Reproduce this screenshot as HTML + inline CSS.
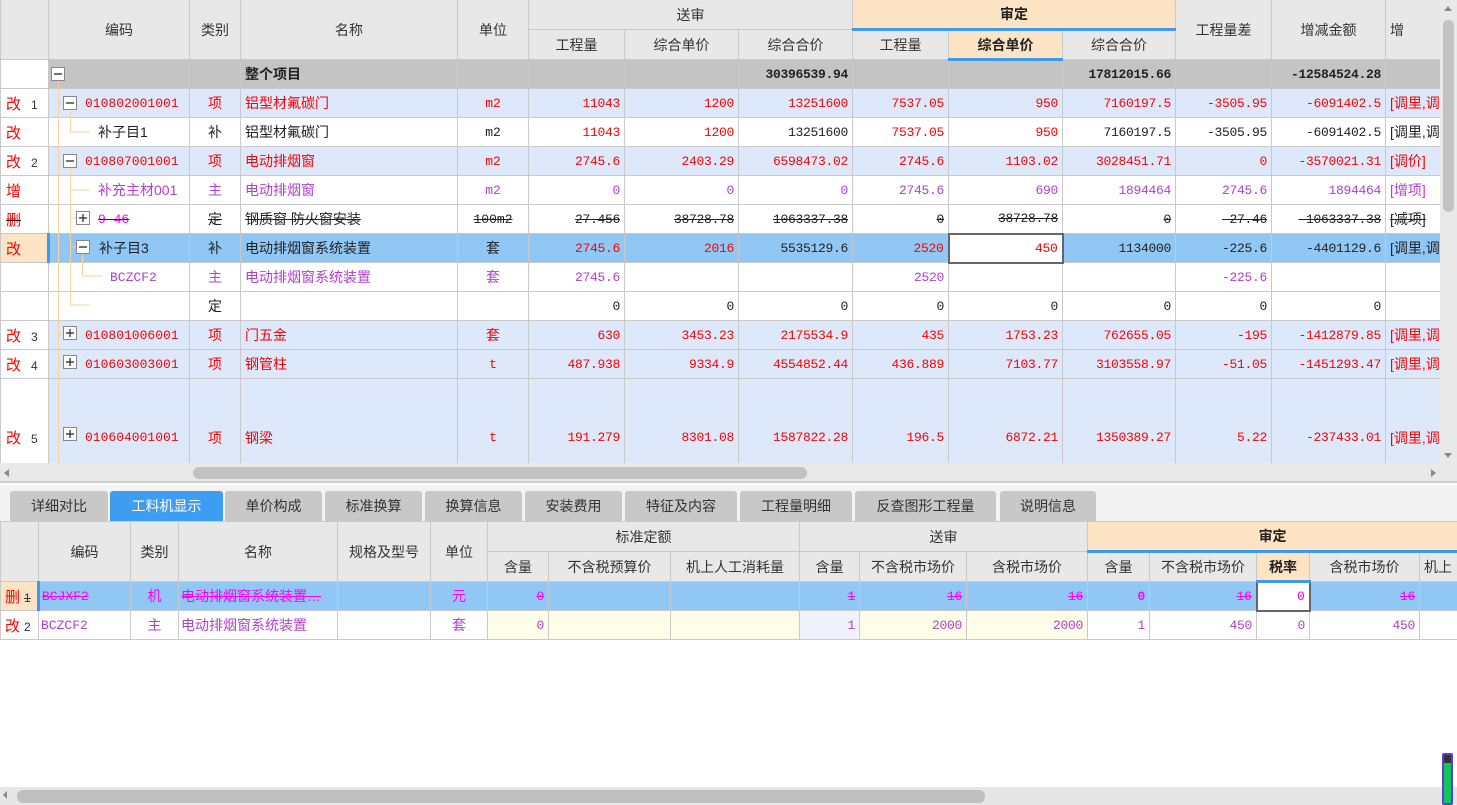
<!DOCTYPE html>
<html><head><meta charset="utf-8">
<style>
*{box-sizing:border-box;margin:0;padding:0}
body{width:1457px;height:805px;overflow:hidden;background:#fff;font-family:"Liberation Sans","Noto Sans CJK SC",sans-serif;font-size:14px;color:#222;position:relative}
table{border-collapse:collapse;table-layout:fixed;position:absolute}
td{border:1px solid #c9c9c9;white-space:nowrap;overflow:hidden;padding:0 4px;height:29px;vertical-align:middle}
.h td{background:#e8e8e8;text-align:center;color:#333;height:30px}
.top .h td{height:30px}
.n{text-align:right;font-family:"Liberation Mono","Noto Sans CJK SC",monospace;font-size:13px;letter-spacing:-0.3px}
.c{text-align:center}
.tot td{background:#c4c4c4;font-weight:bold}
.lb td{background:#dde9fb}
.sel td{background:#91c7f5}
.red{color:#f00}.pur{color:#b040d0}.mag{color:#f0f}.blu{color:#00f}
.s{text-decoration:line-through}
.rn{background:#fff!important;padding:0 0 0 5px}
.rn b{font-weight:normal;color:#f00;font-size:15px}
.rn i{font-style:normal;color:#333;font-size:12px;margin-left:10px}
.mono{font-family:"Liberation Mono",monospace;font-size:13px}
.sd{background:#fde4c4!important;font-weight:bold;color:#222!important}
.tall td{padding-top:28px}
.tab{position:absolute;top:491px;height:30px;background:#c8c8c8;border-radius:3px 3px 0 0;text-align:center;line-height:30px;color:#333;font-size:14px}
</style></head><body>
<div style="position:absolute;left:0;top:0;width:1440px;height:463px;overflow:hidden">
<table class="top" style="left:0;top:-1px;width:1440px">
<colgroup><col style="width:48px"><col style="width:141px"><col style="width:51px"><col style="width:217px"><col style="width:71px"><col style="width:96px"><col style="width:114px"><col style="width:114px"><col style="width:96px"><col style="width:114px"><col style="width:113px"><col style="width:96px"><col style="width:114px"><col style="width:55px"></colgroup>
<tr class="h"><td rowspan="2"></td><td rowspan="2">编码</td><td rowspan="2">类别</td><td rowspan="2">名称</td><td rowspan="2">单位</td><td colspan="3">送审</td><td colspan="3" class="sd" style="border-bottom:3px solid #3c9bf0">审定</td><td rowspan="2">工程量差</td><td rowspan="2">增减金额</td><td rowspan="2" style="text-align:left">增</td></tr>
<tr class="h"><td>工程量</td><td>综合单价</td><td>综合合价</td><td>工程量</td><td class="sd" style="border-bottom:3px solid #3c9bf0">综合单价</td><td>综合合价</td></tr>
<tr class="tot"><td class="rn"></td><td></td><td></td><td>整个项目</td><td></td><td></td><td></td><td class="n">30396539.94</td><td></td><td></td><td class="n">17812015.66</td><td></td><td class="n">-12584524.28</td><td></td></tr>
<tr class="lb red"><td class="rn"><b>改</b><i>1</i></td><td class="mono" style="padding-left:36px">010802001001</td><td class="c">项</td><td>铝型材氟碳门</td><td class="c mono">m2</td><td class="n">11043</td><td class="n">1200</td><td class="n">13251600</td><td class="n">7537.05</td><td class="n">950</td><td class="n">7160197.5</td><td class="n">-3505.95</td><td class="n">-6091402.5</td><td>[调里,调</td></tr>
<tr><td class="rn"><b>改</b></td><td style="padding-left:49px">补子目1</td><td class="c">补</td><td>铝型材氟碳门</td><td class="c mono">m2</td><td class="n red">11043</td><td class="n red">1200</td><td class="n">13251600</td><td class="n red">7537.05</td><td class="n red">950</td><td class="n">7160197.5</td><td class="n">-3505.95</td><td class="n">-6091402.5</td><td>[调里,调</td></tr>
<tr class="lb red"><td class="rn"><b>改</b><i>2</i></td><td class="mono" style="padding-left:36px">010807001001</td><td class="c">项</td><td>电动排烟窗</td><td class="c mono">m2</td><td class="n">2745.6</td><td class="n">2403.29</td><td class="n">6598473.02</td><td class="n">2745.6</td><td class="n">1103.02</td><td class="n">3028451.71</td><td class="n">0</td><td class="n">-3570021.31</td><td>[调价]</td></tr>
<tr class="pur"><td class="rn"><b class="blu">增</b></td><td style="padding-left:49px">补充主材001</td><td class="c">主</td><td>电动排烟窗</td><td class="c mono">m2</td><td class="n">0</td><td class="n">0</td><td class="n">0</td><td class="n">2745.6</td><td class="n">690</td><td class="n">1894464</td><td class="n">2745.6</td><td class="n">1894464</td><td>[增项]</td></tr>
<tr class="s"><td class="rn" style="text-decoration:none"><b class="mag">删</b></td><td class="mono mag" style="padding-left:49px">9-46</td><td class="c">定</td><td>钢质窗 防火窗安装</td><td class="c mono">100m2</td><td class="n">27.456</td><td class="n">38728.78</td><td class="n">1063337.38</td><td class="n">0</td><td class="n">38728.78</td><td class="n">0</td><td class="n">-27.46</td><td class="n">-1063337.38</td><td>[减项]</td></tr>
<tr class="sel"><td class="rn" style="background:#fde4c4!important;border-right:3px solid #3c9bf0"><b>改</b></td><td style="padding-left:49px">补子目3</td><td class="c">补</td><td>电动排烟窗系统装置</td><td class="c">套</td><td class="n red">2745.6</td><td class="n red">2016</td><td class="n">5535129.6</td><td class="n red">2520</td><td class="n red" style="background:#fff;border:2px solid #666">450</td><td class="n">1134000</td><td class="n">-225.6</td><td class="n">-4401129.6</td><td>[调里,调</td></tr>
<tr class="pur"><td class="rn"></td><td class="mono" style="padding-left:61px">BCZCF2</td><td class="c">主</td><td>电动排烟窗系统装置</td><td class="c">套</td><td class="n">2745.6</td><td></td><td></td><td class="n">2520</td><td></td><td></td><td class="n">-225.6</td><td></td><td></td></tr>
<tr><td class="rn"></td><td></td><td class="c">定</td><td></td><td></td><td class="n">0</td><td class="n">0</td><td class="n">0</td><td class="n">0</td><td class="n">0</td><td class="n">0</td><td class="n">0</td><td class="n">0</td><td></td></tr>
<tr class="lb red"><td class="rn"><b>改</b><i>3</i></td><td class="mono" style="padding-left:36px">010801006001</td><td class="c">项</td><td>门五金</td><td class="c">套</td><td class="n">630</td><td class="n">3453.23</td><td class="n">2175534.9</td><td class="n">435</td><td class="n">1753.23</td><td class="n">762655.05</td><td class="n">-195</td><td class="n">-1412879.85</td><td>[调里,调</td></tr>
<tr class="lb red"><td class="rn"><b>改</b><i>4</i></td><td class="mono" style="padding-left:36px">010603003001</td><td class="c">项</td><td>钢管柱</td><td class="c mono">t</td><td class="n">487.938</td><td class="n">9334.9</td><td class="n">4554852.44</td><td class="n">436.889</td><td class="n">7103.77</td><td class="n">3103558.97</td><td class="n">-51.05</td><td class="n">-1451293.47</td><td>[调里,调</td></tr>
<tr class="lb red tall"><td class="rn" style="height:90px;padding-top:28px"><b>改</b><i>5</i></td><td class="mono" style="padding-left:36px">010604001001</td><td class="c">项</td><td>钢梁</td><td class="c mono">t</td><td class="n">191.279</td><td class="n">8301.08</td><td class="n">1587822.28</td><td class="n">196.5</td><td class="n">6872.21</td><td class="n">1350389.27</td><td class="n">5.22</td><td class="n">-237433.01</td><td>[调里,调</td></tr>
</table>
<svg style="position:absolute;left:0;top:0" width="200" height="463">
<g stroke="#fcd29a" stroke-width="1" fill="none">
<path d="M58.5 82V463"/><path d="M70.5 110V132H90"/><path d="M58 104H64"/><path d="M70.5 168V305H90"/><path d="M70 190H90M70 218H76M70 247H76"/><path d="M82.5 254V276H102"/><path d="M58 162H64M58 334H64M58 362H64M58 434H64"/>
</g>
<g fill="#fff" stroke="#888"><rect x="51.5" y="67.5" width="13" height="13"/><rect x="63.5" y="96.5" width="13" height="13"/><rect x="63.5" y="154.5" width="13" height="13"/><rect x="76.5" y="211.5" width="13" height="13"/><rect x="76.5" y="240.5" width="13" height="13"/><rect x="63.5" y="326.5" width="13" height="13"/><rect x="63.5" y="355.5" width="13" height="13"/><rect x="63.5" y="427.5" width="13" height="13"/></g>
<g stroke="#222" stroke-width="1.2"><path d="M54 74H62M66 103H74M66 161H74M79 218H87M83 214V222M79 247H87M66 333H74M70 329V337M66 362H74M70 358V366M66 434H74M70 430V438"/></g>
</svg>
</div>
<div style="position:absolute;left:1440px;top:0;width:17px;height:463px;background:#e9e9e9"></div>
<div style="position:absolute;left:1443px;top:20px;width:11px;height:192px;background:#c2c2c2;border-radius:5px"></div>
<div style="position:absolute;left:1444px;top:6px;width:0;height:0;border:4px solid transparent;border-bottom:5px solid #888;border-top:0"></div>
<div style="position:absolute;left:1444px;top:453px;width:0;height:0;border:4px solid transparent;border-top:5px solid #888;border-bottom:0"></div>
<div style="position:absolute;left:0;top:463px;width:1457px;height:20px;background:#e9e9e9;border-bottom:2px solid #d0d0d0"></div>
<div style="position:absolute;left:193px;top:467px;width:614px;height:12px;background:#c2c2c2;border-radius:6px"></div>
<div style="position:absolute;left:4px;top:469px;border:4px solid transparent;border-right:5px solid #888;border-left:0"></div>
<div style="position:absolute;left:1431px;top:469px;border:4px solid transparent;border-left:5px solid #888;border-right:0"></div>
<div style="position:absolute;left:0;top:485px;width:1457px;height:36px;background:#f3f3f3"></div>
<div class="tab" style="left:10px;width:98px">详细对比</div>
<div class="tab" style="left:110px;width:113px;background:#3d9df2;color:#fff">工料机显示</div>
<div class="tab" style="left:225px;width:97px">单价构成</div>
<div class="tab" style="left:325px;width:97px">标准换算</div>
<div class="tab" style="left:425px;width:97px">换算信息</div>
<div class="tab" style="left:525px;width:97px">安装费用</div>
<div class="tab" style="left:625px;width:112px">特征及内容</div>
<div class="tab" style="left:740px;width:112px">工程量明细</div>
<div class="tab" style="left:855px;width:141px">反查图形工程量</div>
<div class="tab" style="left:1000px;width:96px">说明信息</div>
<table style="left:0;top:521px;width:1457px">
<colgroup><col style="width:38px"><col style="width:92px"><col style="width:48px"><col style="width:159px"><col style="width:93px"><col style="width:57px"><col style="width:61px"><col style="width:122px"><col style="width:129px"><col style="width:60px"><col style="width:107px"><col style="width:121px"><col style="width:62px"><col style="width:107px"><col style="width:53px"><col style="width:110px"><col style="width:38px"></colgroup>
<tr class="h"><td rowspan="2"></td><td rowspan="2">编码</td><td rowspan="2">类别</td><td rowspan="2">名称</td><td rowspan="2">规格及型号</td><td rowspan="2">单位</td><td colspan="3">标准定额</td><td colspan="3">送审</td><td colspan="5" class="sd" style="border-bottom:3px solid #3c9bf0">审定</td></tr>
<tr class="h"><td>含量</td><td>不含税预算价</td><td>机上人工消耗量</td><td>含量</td><td>不含税市场价</td><td>含税市场价</td><td>含量</td><td>不含税市场价</td><td class="sd" style="border-bottom:3px solid #3c9bf0">税率</td><td>含税市场价</td><td style="text-align:left">机上</td></tr>
<tr class="sel mag"><td class="rn" style="background:#fde4c4!important;border-right:3px solid #3c9bf0;padding:0 0 0 4px"><b class="mag">删</b><i class="s" style="margin-left:4px">1</i></td><td class="mono s" style="padding-left:2px">BCJXF2</td><td class="c">机</td><td class="s" style="padding-left:2px">电动排烟窗系统装置…</td><td></td><td class="c">元</td><td class="n s">0</td><td></td><td></td><td class="n s">1</td><td class="n s">16</td><td class="n s">16</td><td class="n" style="font-weight:bold">0</td><td class="n s">16</td><td class="n" style="background:#fff;border:2px solid #666">0</td><td class="n s">16</td><td></td></tr>
<tr class="pur"><td class="rn" style="padding:0 0 0 4px"><b>改</b><i style="margin-left:4px">2</i></td><td class="mono" style="padding-left:2px">BCZCF2</td><td class="c">主</td><td style="padding-left:2px">电动排烟窗系统装置</td><td></td><td class="c">套</td><td class="n" style="background:#fefde8">0</td><td style="background:#fefde8"></td><td style="background:#fefde8"></td><td class="n" style="background:#eef3fd">1</td><td class="n" style="background:#fefde8">2000</td><td class="n" style="background:#fefde8">2000</td><td class="n">1</td><td class="n">450</td><td class="n">0</td><td class="n">450</td><td></td></tr>
</table>
<div style="position:absolute;left:0;top:787px;width:1457px;height:18px;background:#e6e6e6"></div>
<div style="position:absolute;left:17px;top:790px;width:968px;height:13px;background:#bfbfbf;border-radius:6px"></div>
<div style="position:absolute;left:3px;top:791px;border:4px solid transparent;border-right:4px solid #888;border-left:0"></div>
<div style="position:absolute;left:1442px;top:753px;width:11px;height:52px;background:#13c55e;border:2px solid #5b3fd8;border-radius:2px"></div>
<div style="position:absolute;left:1444px;top:755px;width:7px;height:8px;background:#333"></div>
</body></html>
